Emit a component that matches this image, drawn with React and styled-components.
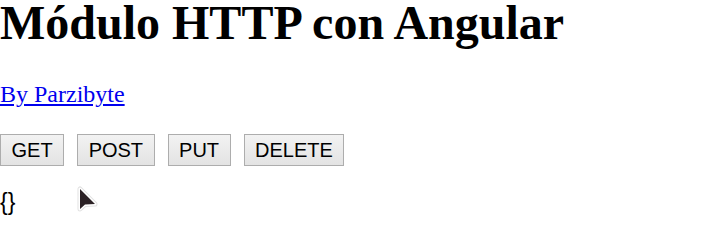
import styled, { createGlobalStyle } from "styled-components";

const GlobalStyle = createGlobalStyle`
  html, body {
    margin: 0;
    background: #ffffff;
  }
  body {
    font-family: "Liberation Serif", "Times New Roman", serif;
    color: #000;
  }
`;

const Page = styled.div`
  position: relative;
  width: 716px;
  height: 225px;
  overflow: hidden;
`;

const Title = styled.h1`
  margin: -1px 0 0;
  font-size: 48px;
  line-height: 48px;
  font-weight: bold;
`;

const Author = styled.p`
  margin: 33px 0 0;
  font-size: 24px;
  line-height: 28px;

  a {
    color: #0000ee;
  }
`;

const Actions = styled.div`
  display: flex;
  gap: 13px;
  margin-top: 26px;
`;

const Button = styled.button`
  font-family: "Liberation Sans", Arial, sans-serif;
  font-size: 20px;
  line-height: 24px;
  color: #000;
  padding: 3px 10.5px;
  border: 1px solid #adadad;
  border-radius: 0;
  background: linear-gradient(#f2f2f2, #e3e3e3);
  cursor: pointer;
`;

const Output = styled.div`
  margin: 22px 0 0;
  font-family: "Liberation Sans", Arial, sans-serif;
  font-size: 23px;
  line-height: 28px;
`;

const Pointer = styled.svg`
  position: absolute;
  left: 76px;
  top: 184px;
`;

const arrow = "M4 5 L4 25 L9 20.5 L19 20 Z";

export default function App() {
  return (
    <Page>
      <GlobalStyle />
      <Title>Módulo HTTP con Angular</Title>
      <Author>
        <a href="#">By Parzibyte</a>
      </Author>
      <Actions>
        <Button>GET</Button>
        <Button>POST</Button>
        <Button>PUT</Button>
        <Button>DELETE</Button>
      </Actions>
      <Output>{"{}"}</Output>
      <Pointer width="24" height="31" viewBox="0 0 24 31">
        <path d={arrow} fill="none" stroke="#e2e2e2" strokeWidth="5" strokeLinejoin="round" />
        <path d={arrow} fill="none" stroke="#ffffff" strokeWidth="3" strokeLinejoin="round" />
        <path d={arrow} fill="#2b2125" />
      </Pointer>
    </Page>
  );
}
